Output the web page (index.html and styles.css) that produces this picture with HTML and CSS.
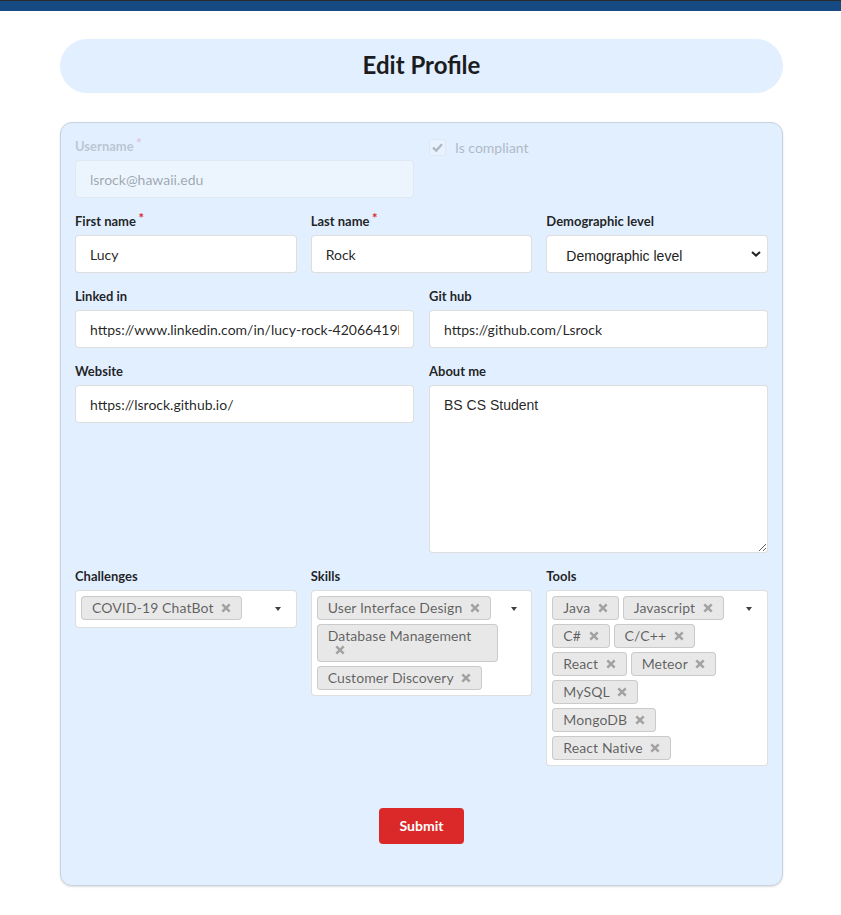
FILE: index.html
```html
<!DOCTYPE html>
<html lang="en">
<head>
<meta charset="utf-8">
<title>Edit Profile</title>
<link rel="stylesheet" href="styles.css">
</head>
<body>
<div class="topbar"></div>
<main class="page">
  <h2 class="title">Edit Profile</h2>
  <form class="card">
    <div class="row two">
      <div class="field disabled required">
        <label>Username</label>
        <input class="input" type="text" value="lsrock@hawaii.edu" disabled>
      </div>
      <div class="field disabled">
        <div class="checkbox">
          <span class="box"><svg viewBox="0 0 17 17" width="17" height="17"><path d="M4 8.6 L7.2 11.6 L13 5.2" fill="none" stroke="#000" stroke-width="2.4"/></svg></span>
          <span class="cb-label">Is compliant</span>
        </div>
      </div>
    </div>

    <div class="row three">
      <div class="field required">
        <label>First name</label>
        <input class="input" type="text" value="Lucy">
      </div>
      <div class="field required">
        <label>Last name</label>
        <input class="input" type="text" value="Rock">
      </div>
      <div class="field">
        <label>Demographic level</label>
        <div class="select-wrap">
          <select class="select"><option>Demographic level</option></select>
          <svg class="chevron" viewBox="0 0 10 6" width="10" height="6"><path d="M1 1 L5 4.6 L9 1" fill="none" stroke="#222" stroke-width="2"/></svg>
        </div>
      </div>
    </div>

    <div class="row two">
      <div class="field">
        <label>Linked in</label>
        <input class="input" type="text" value="https://www.linkedin.com/in/lucy-rock-42066419b/">
      </div>
      <div class="field">
        <label>Git hub</label>
        <input class="input" type="text" value="https://github.com/Lsrock">
      </div>
    </div>

    <div class="row two">
      <div class="field">
        <label>Website</label>
        <input class="input" type="text" value="https://lsrock.github.io/">
      </div>
      <div class="field">
        <label>About me</label>
        <textarea class="textarea">BS CS Student</textarea>
      </div>
    </div>

    <div class="row three">
      <div class="field">
        <label>Challenges</label>
        <div class="dropdown">
          <div class="chips"><span class="chip">COVID-19 ChatBot<svg class="x" viewBox="0 0 10 10"><path d="M1.3 1.3L8.7 8.7M8.7 1.3L1.3 8.7"/></svg></span></div>
          <div class="caret-col"><span class="caret"></span></div>
        </div>
      </div>
      <div class="field">
        <label>Skills</label>
        <div class="dropdown">
          <div class="chips"><span class="chip">User Interface Design<svg class="x" viewBox="0 0 10 10"><path d="M1.3 1.3L8.7 8.7M8.7 1.3L1.3 8.7"/></svg></span><span class="chip">Database Management<svg class="x" viewBox="0 0 10 10"><path d="M1.3 1.3L8.7 8.7M8.7 1.3L1.3 8.7"/></svg></span><span class="chip">Customer Discovery<svg class="x" viewBox="0 0 10 10"><path d="M1.3 1.3L8.7 8.7M8.7 1.3L1.3 8.7"/></svg></span></div>
          <div class="caret-col"><span class="caret"></span></div>
        </div>
      </div>
      <div class="field">
        <label>Tools</label>
        <div class="dropdown">
          <div class="chips"><span class="chip">Java<svg class="x" viewBox="0 0 10 10"><path d="M1.3 1.3L8.7 8.7M8.7 1.3L1.3 8.7"/></svg></span><span class="chip">Javascript<svg class="x" viewBox="0 0 10 10"><path d="M1.3 1.3L8.7 8.7M8.7 1.3L1.3 8.7"/></svg></span><span class="chip">C#<svg class="x" viewBox="0 0 10 10"><path d="M1.3 1.3L8.7 8.7M8.7 1.3L1.3 8.7"/></svg></span><span class="chip">C/C++<svg class="x" viewBox="0 0 10 10"><path d="M1.3 1.3L8.7 8.7M8.7 1.3L1.3 8.7"/></svg></span><span class="chip">React<svg class="x" viewBox="0 0 10 10"><path d="M1.3 1.3L8.7 8.7M8.7 1.3L1.3 8.7"/></svg></span><span class="chip">Meteor<svg class="x" viewBox="0 0 10 10"><path d="M1.3 1.3L8.7 8.7M8.7 1.3L1.3 8.7"/></svg></span><span class="chip">MySQL<svg class="x" viewBox="0 0 10 10"><path d="M1.3 1.3L8.7 8.7M8.7 1.3L1.3 8.7"/></svg></span><span class="chip">MongoDB<svg class="x" viewBox="0 0 10 10"><path d="M1.3 1.3L8.7 8.7M8.7 1.3L1.3 8.7"/></svg></span><span class="chip">React Native<svg class="x" viewBox="0 0 10 10"><path d="M1.3 1.3L8.7 8.7M8.7 1.3L1.3 8.7"/></svg></span></div>
          <div class="caret-col"><span class="caret"></span></div>
        </div>
      </div>
    </div>

    <div class="actions">
      <button type="button" class="submit">Submit</button>
    </div>
  </form>
</main>
</body>
</html>
```

FILE: styles.css
```css
* { box-sizing: border-box; }

html, body {
  margin: 0;
  padding: 0;
  background: #ffffff;
}

body {
  font-family: Lato, "Open Sans", "Liberation Sans", sans-serif;
  font-size: 14px;
  line-height: 1.4285;
  color: rgba(0, 0, 0, 0.87);
}

.topbar {
  height: 11px;
  background: #154a83;
  border-top: 1px solid #2a2c30;
}

.page {
  padding: 28px 58px 30px 60px;
}

.title {
  margin: 0;
  height: 54px;
  line-height: 52px;
  text-align: center;
  font-size: 24px;
  font-weight: 700;
  color: #1b1c1d;
  background: #e2effe;
  border-radius: 27px;
}

.card {
  margin: 29px 0 0 0;
  padding: 14px 14px 14px 14px;
  background: #e2effe;
  border: 1px solid #c6d3e3;
  border-radius: 12px;
  box-shadow: 0 1px 2px rgba(34, 36, 38, 0.15);
}

.row {
  display: grid;
  column-gap: 15px;
  align-items: start;
  margin-bottom: 14px;
}

.row.two { grid-template-columns: 1fr 1fr; }
.row.three { grid-template-columns: 1fr 1fr 1fr; column-gap: 14px; }

.field { min-width: 0; }

.field > label {
  display: block;
  margin: 0 0 4px 0;
  font-size: 13px;
  font-weight: 700;
  line-height: 19px;
  color: rgba(0, 0, 0, 0.87);
}

.field.required > label::after {
  content: "*";
  display: inline-block;
  vertical-align: top;
  margin: -2.6px 0 0 2.6px;
  color: #db2828;
}

.field.disabled { opacity: 0.45; }
.field.disabled > label { opacity: 0.45; }

.input {
  display: block;
  width: 100%;
  height: 38px;
  margin: 0;
  padding: 9.5px 14px;
  font-family: Lato, "Open Sans", "Liberation Sans", sans-serif;
  font-size: 14px;
  line-height: 17px;
  color: rgba(0, 0, 0, 0.87);
  background: #ffffff;
  border: 1px solid rgba(34, 36, 38, 0.15);
  border-radius: 4px;
  outline: none;
}

.input:disabled { opacity: 0.8; }

.checkbox {
  display: flex;
  align-items: center;
  margin-top: 2px;
  opacity: 0.5;
}

.box {
  width: 17px;
  height: 17px;
  flex: none;
  background: #ffffff;
  border: 1px solid #d4d4d5;
  border-radius: 3px;
  display: flex;
  align-items: center;
  justify-content: center;
  overflow: hidden;
}

.box svg { display: block; flex: none; }

.cb-label {
  margin-left: 9px;
  font-size: 14px;
  line-height: 17px;
  color: #000;
}

.select-wrap { position: relative; }

.select {
  display: block;
  width: 100%;
  height: 38px;
  margin: 0;
  padding: 4px 30px 0 19px;
  appearance: none;
  -webkit-appearance: none;
  font-family: "Liberation Sans", Arial, sans-serif;
  font-size: 14px;
  color: #222;
  background: #ffffff;
  border: 1px solid rgba(34, 36, 38, 0.15);
  border-radius: 4px;
  outline: none;
}

.chevron {
  position: absolute;
  right: 7px;
  top: 16px;
  pointer-events: none;
}

.textarea {
  display: block;
  width: 100%;
  height: 168px;
  margin: 0;
  padding: 11px 14px;
  font-family: "Liberation Sans", Arial, sans-serif;
  font-size: 14px;
  line-height: 1.2857;
  color: rgba(0, 0, 0, 0.87);
  background: #ffffff;
  border: 1px solid rgba(34, 36, 38, 0.15);
  border-radius: 4px;
  resize: vertical;
  outline: none;
}

.dropdown {
  display: flex;
  align-items: flex-start;
  min-height: 38px;
  padding: 3.17px 0 3.17px 5px;
  background: #ffffff;
  border: 1px solid rgba(34, 36, 38, 0.15);
  border-radius: 4px;
}

.chips {
  flex: 1 1 auto;
  min-width: 0;
  display: flex;
  flex-wrap: wrap;
  align-items: flex-start;
}

.chip {
  display: inline-block;
  margin: 2px 4px 2px 0;
  padding: 5px 11px;
  font-size: 14px;
  line-height: 1;
  letter-spacing: 0.1px;
  white-space: normal;
  color: rgba(0, 0, 0, 0.6);
  background: #e8e8e8;
  border-radius: 4px;
  box-shadow: 0 0 0 1px rgba(34, 36, 38, 0.15) inset;
}

.x {
  display: inline-block;
  width: 10px;
  height: 10px;
  margin-left: 7.5px;
  vertical-align: 0.3px;
  fill: none;
  stroke: #a2a2a2;
  stroke-width: 2.5;
}

.caret-col {
  flex: 0 0 29.4px;
  padding: 12.8px 0 0 8.6px;
}

.caret {
  display: block;
  width: 0;
  height: 0;
  border-left: 3.5px solid transparent;
  border-right: 3.5px solid transparent;
  border-top: 4px solid rgba(0, 0, 0, 0.75);
}

.actions {
  display: flex;
  justify-content: center;
  padding-top: 28px;
  margin-bottom: 27px;
}

.submit {
  margin: 0;
  padding: 11px 21px;
  font-family: Lato, "Open Sans", "Liberation Sans", sans-serif;
  font-size: 14px;
  font-weight: 700;
  line-height: 1;
  color: #ffffff;
  background: #db2828;
  border: none;
  border-radius: 4px;
}
```
